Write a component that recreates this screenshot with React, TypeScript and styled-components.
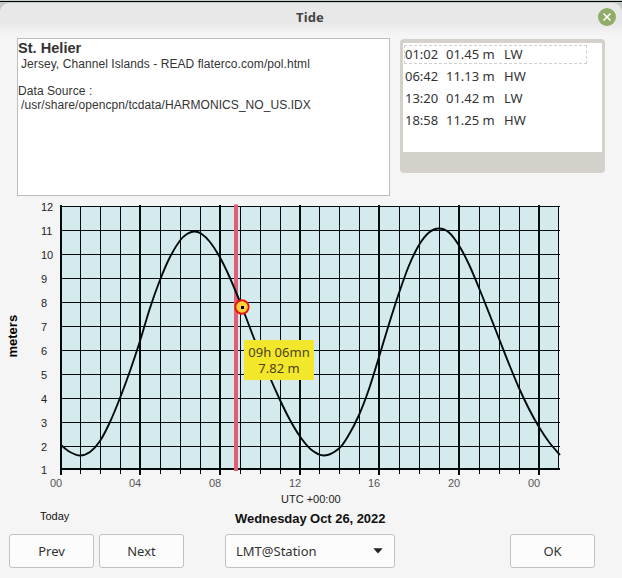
import styled, { createGlobalStyle } from "styled-components";

const tides = [
  { time: "01:02", height: "01.45 m", type: "LW" },
  { time: "06:42", height: "11.13 m", type: "HW" },
  { time: "13:20", height: "01.42 m", type: "LW" },
  { time: "18:58", height: "11.25 m", type: "HW" },
];

const levels = [12, 11, 10, 9, 8, 7, 6, 5, 4, 3, 2, 1];

// x of every hour line, every fourth one is drawn thick
const hours = [
  61, 80.5, 100.5, 120.5, 140, 160.5, 180.5, 200.5, 220, 240.5, 260.5, 280.5,
  300, 319.5, 339.5, 359.5, 379, 399.5, 419.5, 439.5, 459, 479.5, 499.5, 519.5,
  539,
];

const hourLabels = [
  { x: 50, text: "00" },
  { x: 129, text: "04" },
  { x: 209, text: "08" },
  { x: 289, text: "12" },
  { x: 368, text: "16" },
  { x: 448, text: "20" },
  { x: 528, text: "00" },
];

const curve: [number, number][] = [
  [61, 445], [70, 452], [80, 455.5], [90, 452], [100, 441], [110, 422],
  [120, 398], [130, 371], [140, 341], [150, 308], [160, 280], [170, 257],
  [180, 240.5], [187, 234], [194, 231.5], [201, 233.5], [210, 242],
  [220, 257.5], [230, 278], [242, 307], [255, 341], [268, 373], [280, 400],
  [290, 420], [300, 436.5], [311, 449.5], [324, 455.5], [339, 448.5],
  [349, 434.5], [359, 415], [369, 389], [379, 357], [389, 324], [399, 293],
  [409, 265.5], [419, 245], [429, 232.5], [439, 228.5], [449, 232.5],
  [459, 245.5], [469, 264.5], [479, 288], [489, 313], [499, 338.5],
  [509, 364], [519, 388], [529, 409], [539, 427], [549, 442], [560, 455],
];

const smooth = (p: [number, number][]) =>
  p.slice(1).reduce((d, b, i) => {
    const a = p[i];
    const before = p[i - 1] || a;
    const after = p[i + 2] || b;
    return (
      d +
      `C${a[0] + (b[0] - before[0]) / 6} ${a[1] + (b[1] - before[1]) / 6} ` +
      `${b[0] - (after[0] - a[0]) / 6} ${b[1] - (after[1] - a[1]) / 6} ${b[0]} ${b[1]}`
    );
  }, `M${p[0][0]} ${p[0][1]}`);

const App = () => {
  return (
    <Window>
      <Global />
      <TitleBar>
        <Title>Tide</Title>
        <Close aria-label="Close">
          <svg width="18" height="18" viewBox="0 0 18 18">
            <path
              d="M5.5 5.5 L12.5 12.5 M12.5 5.5 L5.5 12.5"
              stroke="#fff"
              strokeWidth="1.6"
            />
          </svg>
        </Close>
      </TitleBar>

      <Top>
        <Station>
          <Name>St. Helier</Name>
          <Line $indent>Jersey, Channel Islands - READ flaterco.com/pol.html</Line>
          <Line $gap>Data Source :</Line>
          <Line $indent>/usr/share/opencpn/tcdata/HARMONICS_NO_US.IDX</Line>
        </Station>
        <Frame>
          <List>
            {tides.map((tide, i) => (
              <Row key={tide.time} $focus={i === 0}>
                <span>{tide.time}</span>
                <span>{tide.height}</span>
                <span>{tide.type}</span>
              </Row>
            ))}
          </List>
        </Frame>
      </Top>

      <ChartArea>
        <Chart width="622" height="296" viewBox="0 196 622 296">
          <rect x="61" y="206" width="498" height="263" fill="#d5eaec" />
          {levels.map((level, i) => (
            <g key={level}>
              {level > 1 && (
                <path d={`M61 ${206.5 + i * 24}H560`} stroke="#000b0d" />
              )}
              <text x="41" y={level > 1 ? 211 + i * 24 : 474} fill="#222">
                {level}
              </text>
            </g>
          ))}
          {hours.map((x, i) => (
            <path
              key={x}
              d={`M${x} ${i % 4 ? 206 : 205}V${i % 4 ? 474 : 475}`}
              stroke="#000b0d"
              strokeWidth={i % 4 ? 1 : 2}
            />
          ))}
          <path d="M558.5 206V469" stroke="#000b0d" />
          <path d="M60 469H560" stroke="#000b0d" strokeWidth="2" />
          {hourLabels.map((label) => (
            <text key={label.x} x={label.x} y="487" fill="#555">
              {label.text}
            </text>
          ))}
          <path d="M236 204.5V471" stroke="#e25d75" strokeWidth="4" />
          <path d={smooth(curve)} fill="none" stroke="#000b0d" strokeWidth="1.9" />
          <circle cx="242" cy="307" r="6.7" fill="#ffd03a" stroke="#e6160c" strokeWidth="1.9" />
          <rect x="241" y="306" width="3" height="3" fill="#000" />
          <AxisTitle transform="translate(17 357.5) rotate(-90)">meters</AxisTitle>
        </Chart>
        <Tooltip>
          <span>09h 06mn</span>
          <span>7.82 m</span>
        </Tooltip>
      </ChartArea>

      <Zone>UTC +00:00</Zone>
      <Dates>
        <Today>Today</Today>
        <Day>Wednesday Oct 26, 2022</Day>
      </Dates>

      <Actions>
        <Button>Prev</Button>
        <Button>Next</Button>
        <Select>
          LMT@Station
          <svg width="10" height="6" viewBox="0 0 10 6">
            <path d="M0.3 0.3H9.7L5 5.6Z" fill="#222" />
          </svg>
        </Select>
        <Button>OK</Button>
      </Actions>
    </Window>
  );
};

export default App;

const Global = createGlobalStyle`
  * {
    box-sizing: border-box;
  }

  body {
    margin: 0;
    background: #c6cec6;
  }
`;

const Window = styled.div`
  width: 622px;
  height: 578px;
  display: flex;
  flex-direction: column;
  overflow: hidden;
  border-top: 1px solid #c6d0c6;
  background: linear-gradient(#000 1px, #c3ccc8 1px, #c3ccc8 12px, #f5f5f5 12px);
  font-family: "Liberation Sans", Arial, sans-serif;
  color: #333;
`;

const TitleBar = styled.div`
  height: 35px;
  margin-top: 2px;
  display: flex;
  align-items: center;
  flex-shrink: 0;
  padding: 0 6px 7px 22px;
  border-radius: 9px 9px 0 0;
  background: linear-gradient(#e8e8e8 20px, #f5f5f5 32px);
`;

const Title = styled.div`
  flex: 1;
  text-align: center;
  font-family: "Noto Sans", sans-serif;
  font-size: 13px;
  font-weight: 700;
  letter-spacing: 0.1px;
  color: #444;
`;

const Close = styled.button`
  width: 18px;
  height: 18px;
  display: flex;
  padding: 0;
  border: none;
  border-radius: 50%;
  background: #91ac68;
`;

const Top = styled.div`
  height: 158px;
  display: flex;
  align-items: flex-start;
  flex-shrink: 0;
  gap: 10px;
  padding-left: 17px;
`;

const Station = styled.div`
  width: 373px;
  height: 158px;
  border: 1px solid #bdbdbd;
  background: #fff;
`;

const Name = styled.div`
  font-size: 14.6px;
  line-height: 18px;
  font-weight: 700;
`;

const Line = styled.div<{ $indent?: boolean; $gap?: boolean }>`
  margin-top: ${(p) => (p.$gap ? "13px" : 0)};
  padding-left: ${(p) => (p.$indent ? "3px" : 0)};
  font-size: 12px;
  line-height: 14px;
  letter-spacing: 0.07px;
  white-space: nowrap;
`;

const Frame = styled.div`
  width: 205px;
  height: 134px;
  margin-top: 1px;
  padding: 4px 3px 21px;
  border-radius: 4px;
  background: #d3d1ca;
`;

const List = styled.div`
  height: 109px;
  padding: 1px 1px;
  background: #fff;
`;

const Row = styled.div<{ $focus: boolean }>`
  width: 183px;
  height: 19px;
  display: grid;
  grid-template-columns: 41px 58px 1fr;
  align-items: center;
  margin: 1px 0 3px;
  border: 1px dashed ${(p) => (p.$focus ? "#d0d0d0" : "transparent")};
  font-family: "Noto Sans", sans-serif;
  font-size: 13px;
  line-height: 16px;
  white-space: nowrap;

  span {
    padding-bottom: 2px;
  }
`;

const ChartArea = styled.div`
  height: 296px;
  flex-shrink: 0;
  position: relative;
`;

const Chart = styled.svg`
  display: block;
  font-size: 11px;
`;

const AxisTitle = styled.text`
  font-size: 13px;
  font-weight: 700;
  fill: #000;
`;

const Tooltip = styled.div`
  position: absolute;
  left: 244px;
  top: 144px;
  width: 70px;
  height: 40px;
  display: flex;
  flex-direction: column;
  align-items: center;
  padding-top: 4px;
  background: #f3e72b;
  font-family: "Noto Sans", sans-serif;
  font-size: 13px;
  line-height: 16px;
  color: #4b431a;
`;

const Zone = styled.div`
  height: 16px;
  flex-shrink: 0;
  padding-left: 281px;
  font-size: 11px;
  line-height: 14px;
  color: #222;
`;

const Dates = styled.div`
  height: 26px;
  display: flex;
  flex-shrink: 0;
  padding-left: 40px;
  color: #111;
`;

const Today = styled.div`
  width: 195px;
  font-size: 11px;
  line-height: 17px;
`;

const Day = styled.div`
  font-size: 13px;
  line-height: 22px;
  font-weight: 700;
  letter-spacing: -0.05px;
`;

const Actions = styled.div`
  display: flex;
  gap: 5px;
  padding: 0 27px 0 9px;
`;

const Button = styled.button`
  width: 85px;
  height: 34px;
  padding: 0;
  border: 1px solid #c2c2c2;
  border-radius: 3px;
  background: #fcfcfc;
  font-family: "Noto Sans", sans-serif;
  font-size: 13px;
  color: #333;

  &:last-child {
    margin-left: auto;
  }
`;

const Select = styled.div`
  width: 170px;
  height: 34px;
  display: flex;
  align-items: center;
  justify-content: space-between;
  margin-left: 36px;
  padding: 0 11px 0 10px;
  border: 1px solid #c2c2c2;
  border-radius: 3px;
  background: #fcfcfc;
  font-family: "Noto Sans", sans-serif;
  font-size: 13px;
`;
